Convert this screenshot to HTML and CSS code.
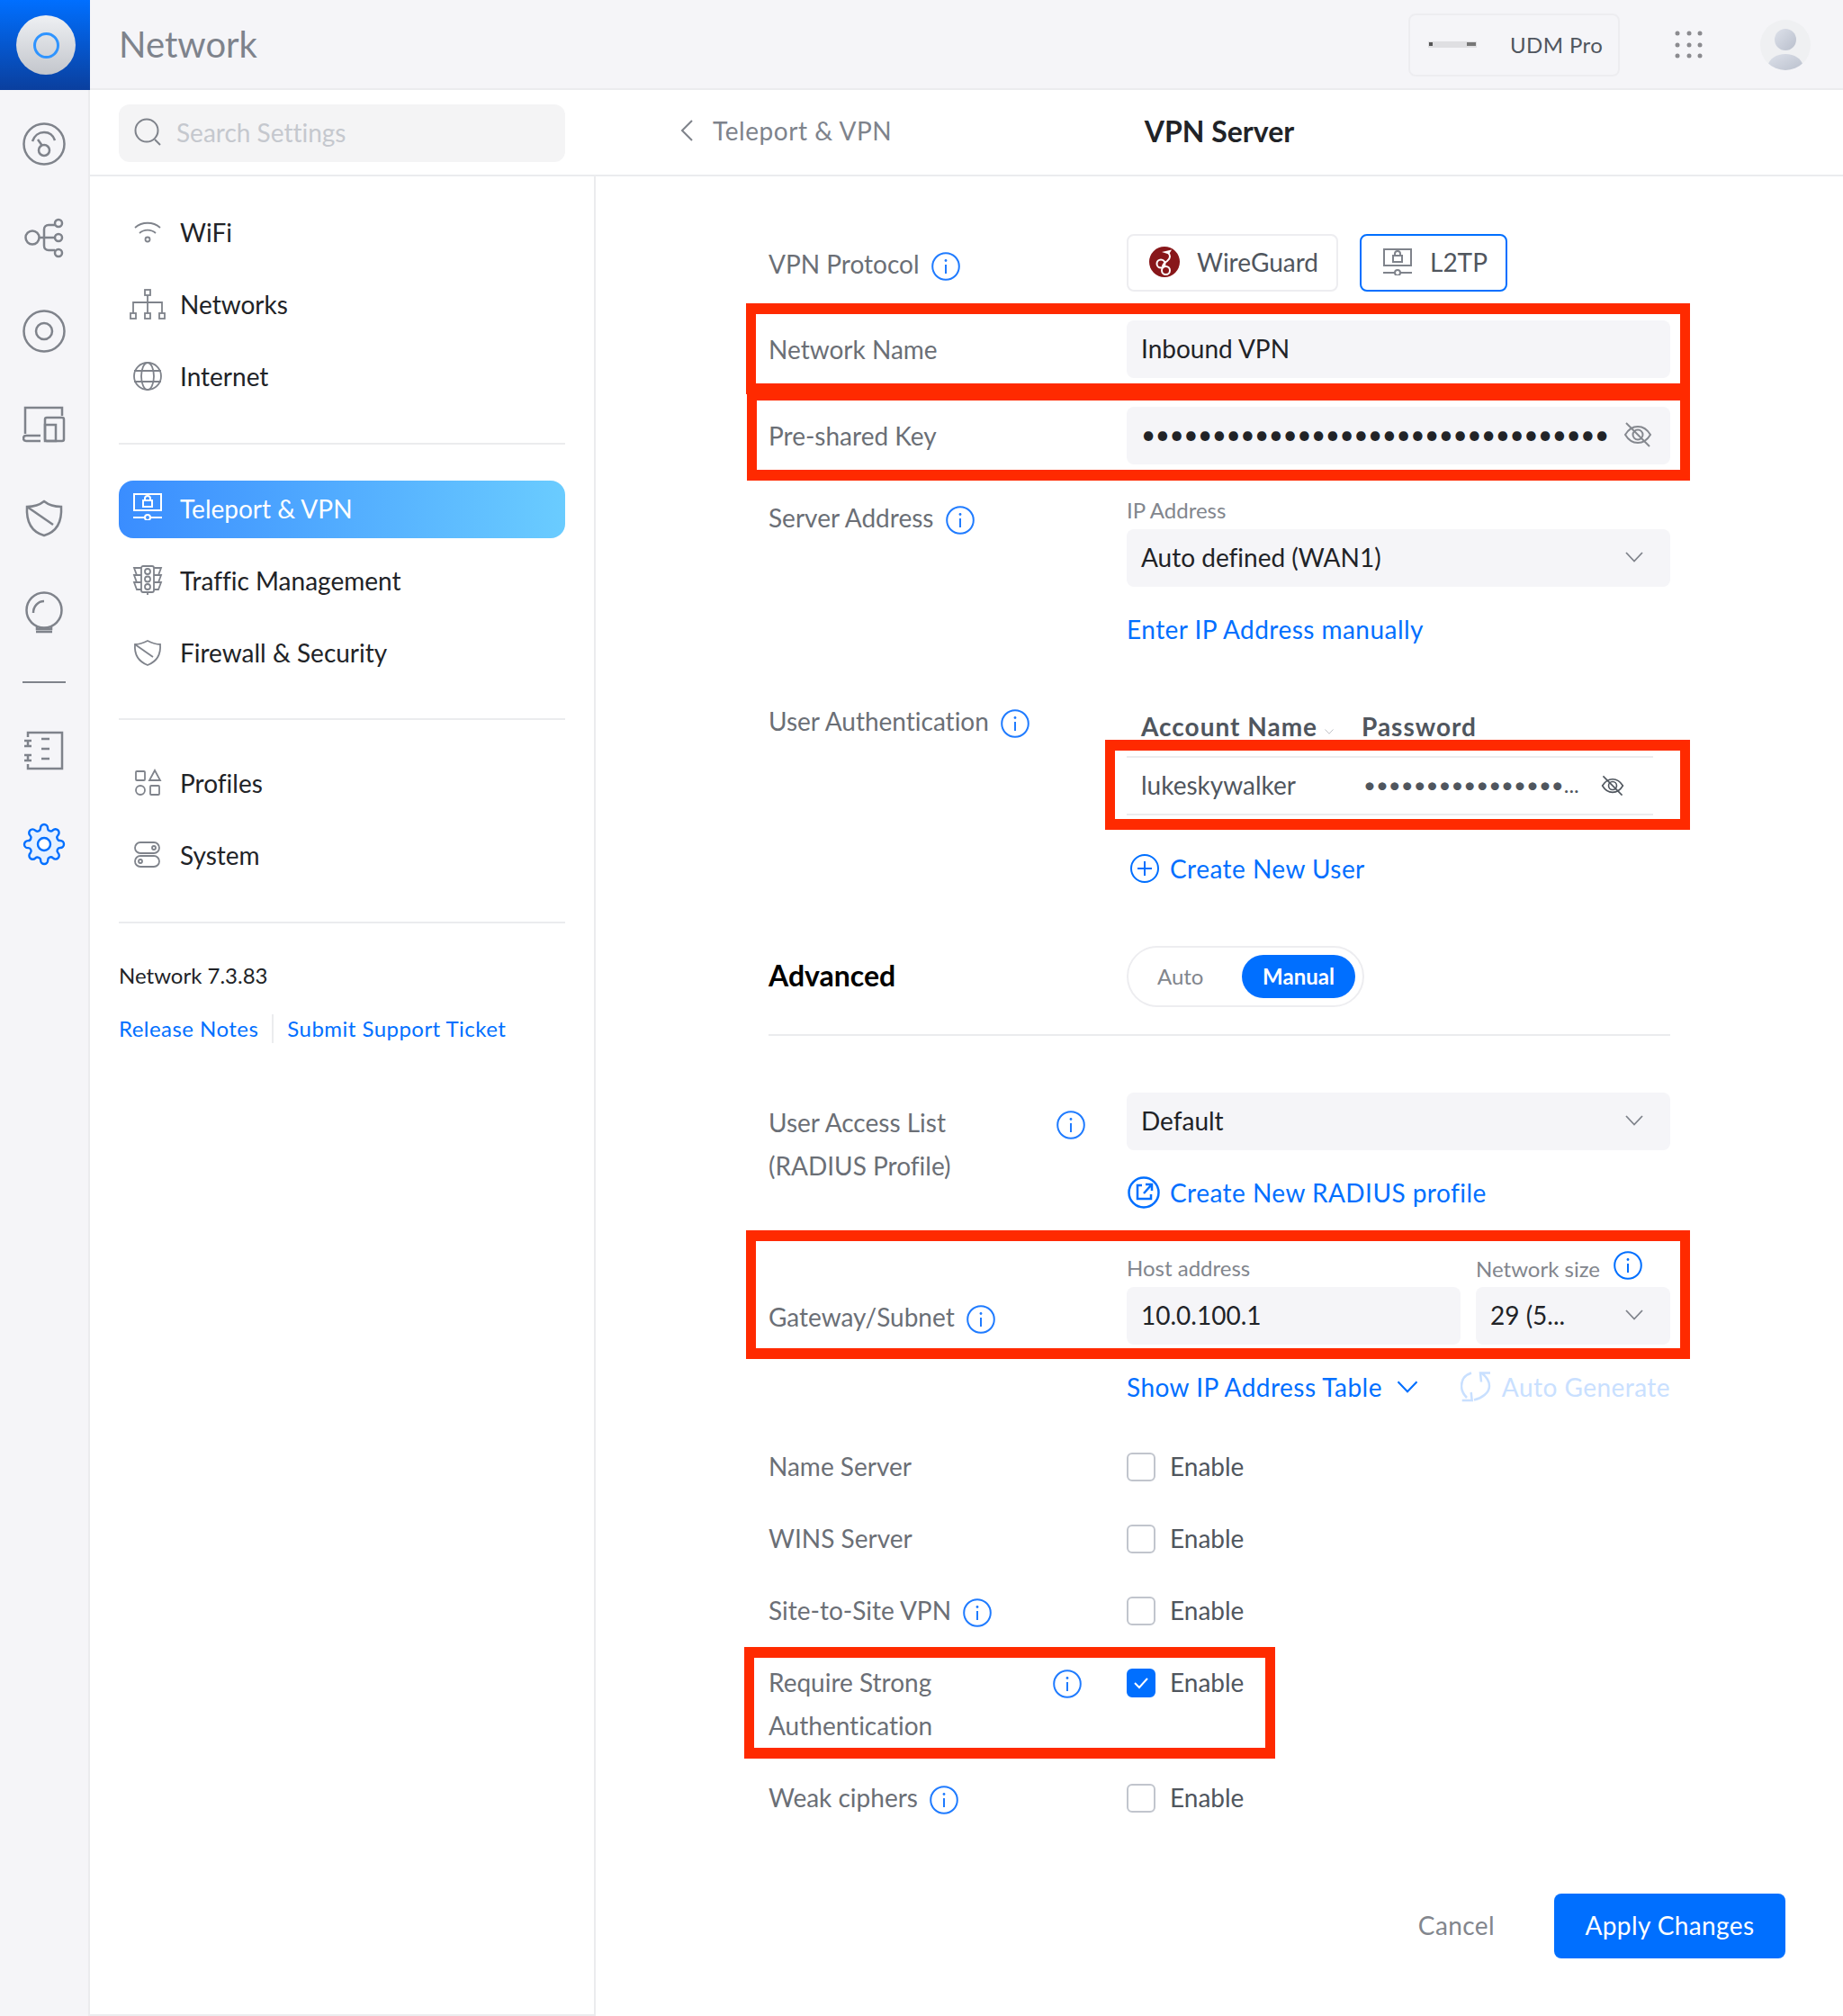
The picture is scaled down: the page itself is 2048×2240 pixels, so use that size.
FILE: index.html
```html
<!DOCTYPE html>
<html lang="en">
<head>
  <meta charset="UTF-8" />
  <title>Network - VPN Server</title>
  <link rel="stylesheet" href="styles.css">
</head>
<body>
  <svg class="defs" width="0" height="0">
    <symbol id="i-info" viewBox="0 0 32 32">
      <circle cx="16" cy="16" r="14.8" fill="none" stroke="currentColor" stroke-width="2"/>
      <circle cx="16" cy="9.5" r="1.4" fill="currentColor"/>
      <path d="M16 14v10" fill="none" stroke="currentColor" stroke-width="2"/>
    </symbol>
    <symbol id="i-chevron" viewBox="0 0 20 12">
      <path d="M1 1l9 9.5L19 1" fill="none" stroke="currentColor" stroke-width="1.8"/>
    </symbol>
    <symbol id="i-eye" viewBox="0 0 32 32">
      <g fill="none" stroke="currentColor" stroke-width="2">
        <path d="M2 16c3-5 8-9 14-9s11 4 14 9c-3 5-8 9-14 9S5 21 2 16z"/>
        <circle cx="16" cy="16" r="5.500"/>
        <path d="M3 3l26 26"/>
      </g>
    </symbol>
    <symbol id="i-vpn" viewBox="0 0 32 30">
      <g fill="none" stroke="currentColor" stroke-width="2">
        <rect x="1" y="1" width="30" height="18"/>
        <rect x="11" y="8" width="10" height="7"/>
        <path d="M13 8V6a3 3 0 0 1 6 0v2M0 27h13M19 27h13"/>
        <circle cx="16" cy="27" r="3"/>
      </g>
    </symbol>
  </svg>

  <div class="app">
    <header class="top-bar">
      <div class="logo">
        <div class="logo-disc"><div class="logo-ring"></div></div>
      </div>
      <div class="app-name">Network</div>
      <div class="device">
        <div class="device-pic"><span class="led"></span><span class="ports"></span></div>
        <span>UDM Pro</span>
      </div>
      <svg class="apps" width="32" height="32" viewBox="0 0 32 32" fill="#8b8b8f">
        <circle cx="3" cy="3" r="2.500"/><circle cx="16" cy="3" r="2.500"/><circle cx="28" cy="3" r="2.500"/>
        <circle cx="3" cy="16" r="2.500"/><circle cx="16" cy="16" r="2.500"/><circle cx="28" cy="16" r="2.500"/>
        <circle cx="3" cy="28" r="2.500"/><circle cx="16" cy="28" r="2.500"/><circle cx="28" cy="28" r="2.500"/>
      </svg>
      <svg class="avatar" width="56" height="56" viewBox="0 0 56 56">
        <defs>
          <clipPath id="avatar-clip"><circle cx="28" cy="28" r="28"/></clipPath>
          <linearGradient id="avatar-fill" x1="0" y1="0" x2="1" y2="1">
            <stop offset="0" stop-color="#dde1ea"/><stop offset="1" stop-color="#b9bfcc"/>
          </linearGradient>
        </defs>
        <circle cx="28" cy="28" r="28" fill="#eff0f2"/>
        <g clip-path="url(#avatar-clip)">
          <circle cx="28" cy="22" r="12" fill="url(#avatar-fill)"/>
          <path d="M8 52c2-9 10-14 20-14s18 5 20 14l-20 6z" fill="url(#avatar-fill)"/>
        </g>
      </svg>
    </header>

    <div class="body-wrap">
      <nav class="rail">
        <svg class="rail-icon" viewBox="0 0 48 48"><ellipse cx="24" cy="24" rx="22.500" ry="22.500"/><path d="M11 21c2-6 7-10 13-10s10 3 12 9"/><circle cx="24" cy="31" r="6"/><path d="M17 19l5 7"/></svg>
        <svg class="rail-icon" viewBox="0 0 48 48"><circle cx="11" cy="24" r="7.500"/><path d="M18.500 24h17.500M36 10h-7c-3 0-5 2-5 5v18c0 3 2 5 5 5h7"/><circle cx="40" cy="8" r="4"/><circle cx="40" cy="24" r="4"/><circle cx="40" cy="41" r="4"/></svg>
        <svg class="rail-icon" viewBox="0 0 48 48"><circle cx="24" cy="24" r="22.500"/><circle cx="24" cy="24" r="9"/></svg>
        <svg class="rail-icon" viewBox="0 0 48 48"><path d="M3 34V5h41v9M20 42H4c-2 0-3-1-3-3s1-3 3-3h16"/><rect x="25" y="16" width="21" height="26" rx="2"/><rect x="25" y="24" width="12" height="18"/></svg>
        <svg class="rail-icon" viewBox="0 0 48 48"><path d="M5 11c8 0 14-2 19-6 5 4 11 6 19 6 1 17-5 28-19 32C10 39 4 28 5 11z"/><path d="M5 11l29 20"/></svg>
        <svg class="rail-icon" viewBox="0 0 48 48"><circle cx="24" cy="22" r="19.500"/><path d="M16 40v3h16v-3M15 46h18M12 25c0-7 5-13 12-13"/></svg>
        <div class="rail-line"></div>
        <svg class="rail-icon" viewBox="0 0 48 48"><path d="M6 9V4h38v40H6v-5"/><path d="M21 11h9M21 22h9M21 33h9M2 13h8M6 13v6M2 19h8M2 29h8M6 29v6M2 35h8"/></svg>
        <svg class="rail-icon gear" viewBox="0 0 24 24"><path d="M19.400 15a1.650 1.650 0 0 0 .33 1.820l.06.06a2 2 0 0 1 0 2.830 2 2 0 0 1-2.830 0l-.06-.06a1.650 1.650 0 0 0-1.820-.33 1.650 1.650 0 0 0-1 1.510V21a2 2 0 0 1-2 2 2 2 0 0 1-2-2v-.09A1.650 1.650 0 0 0 9 19.400a1.650 1.650 0 0 0-1.820.33l-.06.06a2 2 0 0 1-2.830 0 2 2 0 0 1 0-2.830l.06-.06a1.650 1.650 0 0 0 .33-1.820 1.650 1.650 0 0 0-1.510-1H3a2 2 0 0 1-2-2 2 2 0 0 1 2-2h.09A1.650 1.650 0 0 0 4.600 9a1.650 1.650 0 0 0-.33-1.820l-.06-.06a2 2 0 0 1 0-2.830 2 2 0 0 1 2.830 0l.06.06a1.650 1.650 0 0 0 1.820.33H9a1.650 1.650 0 0 0 1-1.510V3a2 2 0 0 1 2-2 2 2 0 0 1 2 2v.09a1.650 1.650 0 0 0 1 1.510 1.650 1.650 0 0 0 1.820-.33l.06-.06a2 2 0 0 1 2.830 0 2 2 0 0 1 0 2.830l-.06.06a1.650 1.650 0 0 0-.33 1.820V9a1.650 1.650 0 0 0 1.510 1H21a2 2 0 0 1 2 2 2 2 0 0 1-2 2h-.09a1.650 1.650 0 0 0-1.510 1z"/><circle cx="12" cy="12" r="3.500" fill="#fff"/></svg>
      </nav>

      <div class="workspace">
        <div class="sub-bar">
          <div class="search-cell">
            <div class="search">
              <svg width="32" height="32" viewBox="0 0 32 32" fill="none" stroke="#7f838b" stroke-width="2"><circle cx="15" cy="14" r="12.500"/><path d="M24 24l6 6"/></svg>
              <span>Search Settings</span>
            </div>
          </div>
          <div class="crumb">
            <div class="crumb-back">
              <svg width="16" height="24" viewBox="0 0 16 24" fill="none" stroke="#7f838b" stroke-width="2"><path d="M13 1L2 12l11 11"/></svg>
              <span>Teleport &amp; VPN</span>
            </div>
            <div class="crumb-title">VPN Server</div>
          </div>
        </div>

        <div class="panes">
          <aside class="sidebar">
            <ul class="menu">
              <li class="menu-item">
                <svg class="menu-icon" viewBox="0 0 40 40"><path d="M6 15c8-7 20-7 28 0M11 21c5-4.500 13-4.500 18 0"/><circle cx="20" cy="28" r="2.500"/></svg>
                WiFi
              </li>
              <li class="menu-item">
                <svg class="menu-icon" viewBox="0 0 40 40"><rect x="17" y="4" width="6" height="6"/><rect x="1" y="30" width="6" height="6"/><rect x="17" y="30" width="6" height="6"/><rect x="33" y="30" width="6" height="6"/><path d="M20 10v20M4 30V18h32v12"/></svg>
                Networks
              </li>
              <li class="menu-item">
                <svg class="menu-icon" viewBox="0 0 40 40"><circle cx="20" cy="20" r="15"/><ellipse cx="20" cy="20" rx="7" ry="15"/><path d="M5 14h30M5 26h30"/></svg>
                Internet
              </li>
            </ul>
            <ul class="menu">
              <li class="menu-item active">
                <svg class="menu-icon" viewBox="0 0 40 40"><use href="#i-vpn" x="4" y="3" width="32" height="30"/></svg>
                Teleport &amp; VPN
              </li>
              <li class="menu-item">
                <svg class="menu-icon" viewBox="0 0 40 40"><rect x="13" y="4" width="14" height="29" rx="2"/><circle cx="20" cy="10" r="3"/><circle cx="20" cy="18.500" r="3"/><circle cx="20" cy="27" r="3"/><path d="M13 6H5l3 8h5M13 14H5l3 8h5M13 22H5l3 8h5M27 6h8l-3 8h-5M27 14h8l-3 8h-5M27 22h8l-3 8h-5M20 33v3"/></svg>
                Traffic Management
              </li>
              <li class="menu-item">
                <svg class="menu-icon" viewBox="0 0 40 40"><path d="M6 11c6 0 10-2 14-4 4 2 8 4 14 4 1 12-4 19-14 23C10 30 5 23 6 11z"/><path d="M6 11l20 14"/></svg>
                Firewall &amp; Security
              </li>
            </ul>
            <ul class="menu menu-last">
              <li class="menu-item">
                <svg class="menu-icon" viewBox="0 0 40 40"><rect x="7" y="7" width="10" height="10" rx="1"/><path d="M28 6l6 11H22z"/><circle cx="12" cy="28" r="5"/><rect x="23" y="23" width="10" height="10" rx="1"/></svg>
                Profiles
              </li>
              <li class="menu-item">
                <svg class="menu-icon" viewBox="0 0 40 40"><rect x="6" y="6" width="27" height="12" rx="6"/><rect x="6" y="21" width="27" height="12" rx="6"/><circle cx="27" cy="12" r="2"/><circle cx="12" cy="27" r="2"/></svg>
                System
              </li>
            </ul>
            <div class="version">Network 7.3.83</div>
            <div class="side-links">
              <a class="side-link">Release Notes</a>
              <a class="side-link">Submit Support Ticket</a>
            </div>
          </aside>

          <main class="main">
            <div class="form">
              <div class="row row-protocol">
                <div class="label">VPN Protocol <svg class="info"><use href="#i-info"/></svg></div>
                <div class="choices">
                  <div class="choice">
                    <svg width="36" height="36" viewBox="0 0 36 36">
                      <circle cx="18" cy="18" r="17" fill="#88171a"/>
                      <g fill="none" stroke="#fff" stroke-width="2">
                        <circle cx="14" cy="20" r="4.500"/>
                        <circle cx="19.500" cy="27.500" r="4.500"/>
                        <path d="M21 7c4 3 4 7 0 10-3 2-5 4-5 6"/>
                      </g>
                      <path d="M15 7l11-2.500-3 5z" fill="#fff"/>
                    </svg>
                    WireGuard
                  </div>
                  <div class="choice selected">
                    <svg class="vpn-icon" width="32" height="30"><use href="#i-vpn"/></svg>
                    L2TP
                  </div>
                </div>
              </div>

              <div class="row">
                <div class="label">Network Name</div>
                <div class="field">Inbound VPN</div>
              </div>

              <div class="row">
                <div class="label">Pre-shared Key</div>
                <div class="field secret">
                  <span class="dots">•••••••••••••••••••••••••••••••••</span>
                  <svg class="eye"><use href="#i-eye"/></svg>
                </div>
              </div>

              <div class="row row-server">
                <div class="label">Server Address <svg class="info"><use href="#i-info"/></svg></div>
                <div>
                  <div class="field-title">IP Address</div>
                  <div class="field select">Auto defined (WAN1) <svg class="chev"><use href="#i-chevron"/></svg></div>
                  <div class="link link-under">Enter IP Address manually</div>
                </div>
              </div>

              <div class="row row-users">
                <div class="label">User Authentication <svg class="info"><use href="#i-info"/></svg></div>
                <div>
                  <div class="user-table">
                    <div class="user-head">
                      <div class="col-name">Account Name <svg class="chev-small" viewBox="0 0 20 12"><use href="#i-chevron"/></svg></div>
                      <div>Password</div>
                    </div>
                    <div class="user-row">
                      <div class="col-name">lukeskywalker</div>
                      <div class="user-pass">••••••••••••••••<span class="more">...</span></div>
                      <svg class="eye-small"><use href="#i-eye"/></svg>
                    </div>
                  </div>
                  <div class="link link-icon link-new-user">
                    <svg width="34" height="34" viewBox="0 0 34 34" fill="none" stroke="currentColor" stroke-width="2"><circle cx="17" cy="17" r="15"/><path d="M17 9v16M9 17h16"/></svg>
                    Create New User
                  </div>
                </div>
              </div>

              <div class="row row-advanced">
                <div class="section-title">Advanced</div>
                <div class="switch">
                  <span class="switch-opt">Auto</span>
                  <span class="switch-opt on">Manual</span>
                </div>
              </div>

              <div class="row row-radius">
                <div class="label-split">
                  <div class="label">User Access List<br>(RADIUS Profile)</div>
                  <svg class="info info-split"><use href="#i-info"/></svg>
                </div>
                <div>
                  <div class="field select">Default <svg class="chev"><use href="#i-chevron"/></svg></div>
                  <div class="link link-icon link-under link-radius">
                    <svg width="36" height="38" viewBox="0 0 36 38" fill="none" stroke="currentColor" stroke-width="2.500"><circle cx="18" cy="19" r="16.500"/><path d="M16 11h-5v15h15v-5M18 20l8-9M20 10h7v7"/></svg>
                    Create New RADIUS profile
                  </div>
                </div>
              </div>

              <div class="row row-gateway">
                <div class="label label-bottom">Gateway/Subnet <svg class="info"><use href="#i-info"/></svg></div>
                <div class="gateway">
                  <div class="gateway-host">
                    <div class="field-title">Host address</div>
                    <div class="field">10.0.100.1</div>
                  </div>
                  <div class="gateway-size">
                    <div class="field-title">Network size <svg class="info info-raised"><use href="#i-info"/></svg></div>
                    <div class="field select">29 (5... <svg class="chev"><use href="#i-chevron"/></svg></div>
                  </div>
                </div>
              </div>

              <div class="row row-table-link">
                <div></div>
                <div class="table-links">
                  <div class="link link-show">Show IP Address Table <svg class="chev-blue"><use href="#i-chevron"/></svg></div>
                  <div class="link link-off">
                    <svg width="34" height="36" viewBox="0 0 34 36" fill="none" stroke="currentColor" stroke-width="2.500"><path d="M12 2.500C4 5 1 11 1 17c0 6 3 10 6 13M1.700 33h11l-1-9M15 32.500c9-2 17-8 17-15.500 0-6-3-10-8-14M33 2.500H22l1 10"/></svg>
                    Auto Generate
                  </div>
                </div>
              </div>

              <div class="row row-check row-check-first">
                <div class="label">Name Server</div>
                <label class="check"><span class="box"></span>Enable</label>
              </div>
              <div class="row row-check">
                <div class="label">WINS Server</div>
                <label class="check"><span class="box"></span>Enable</label>
              </div>
              <div class="row row-check">
                <div class="label">Site-to-Site VPN <svg class="info"><use href="#i-info"/></svg></div>
                <label class="check"><span class="box"></span>Enable</label>
              </div>
              <div class="row row-check">
                <div class="label-split narrow">
                  <div class="label">Require Strong<br>Authentication</div>
                  <svg class="info info-split"><use href="#i-info"/></svg>
                </div>
                <label class="check">
                  <span class="box checked">
                    <svg width="20" height="16" viewBox="0 0 20 16" fill="none" stroke="#fff" stroke-width="2"><path d="M3 8l5 5L17 3"/></svg>
                  </span>Enable
                </label>
              </div>
              <div class="row row-check">
                <div class="label">Weak ciphers <svg class="info"><use href="#i-info"/></svg></div>
                <label class="check"><span class="box"></span>Enable</label>
              </div>
            </div>

            <div class="actions">
              <button class="btn-cancel">Cancel</button>
              <button class="btn-apply">Apply Changes</button>
            </div>
          </main>
        </div>
      </div>
    </div>

    <!-- red markers drawn on top of the form -->
    <div class="mark mark-name"></div>
    <div class="mark mark-key"></div>
    <div class="mark mark-user"></div>
    <div class="mark mark-gateway"></div>
    <div class="mark mark-auth"></div>
  </div>
</body>
</html>
```

FILE: styles.css
```css
* {
  box-sizing: border-box;
}

body {
  margin: 0;
  background: #fff;
  font-family: "Lato", "Noto Sans", sans-serif;
  font-size: 28px;
  font-variant-ligatures: none;
  color: #212327;
}

.defs {
  position: absolute;
}

.app {
  position: relative;
  width: 2048px;
  height: 2240px;
  overflow: hidden;
}

/* top bar */
.top-bar {
  display: flex;
  align-items: center;
  height: 100px;
  background: #f5f5f8;
  border-bottom: 2px solid #ebecee;
}

.logo {
  display: flex;
  align-items: center;
  justify-content: center;
  align-self: flex-start;
  flex: none;
  width: 100px;
  height: 100px;
  padding-left: 2px;
  background: linear-gradient(180deg, #006fff, #0a3f9e);
}

.logo-disc {
  display: flex;
  align-items: center;
  justify-content: center;
  width: 66px;
  height: 66px;
  border-radius: 50%;
  background: linear-gradient(180deg, #eef0f3, #c3c6cc);
}

.logo-ring {
  width: 29px;
  height: 29px;
  border: 3px solid #2f94ff;
  border-radius: 50%;
}

.app-name {
  margin-left: 32px;
  padding-bottom: 1px;
  font-size: 40px;
  color: #7e838c;
}

.device {
  display: flex;
  align-items: center;
  width: 235px;
  height: 70px;
  margin: 2px 0 0 auto;
  padding: 0 0 2px 20px;
  border: 2px solid #ededf0;
  border-radius: 8px;
  font-size: 24px;
  letter-spacing: 0.4px;
  color: #50565e;
}

.device-pic {
  display: flex;
  align-items: center;
  justify-content: space-between;
  width: 54px;
  height: 7px;
  margin-right: 37px;
  padding: 0 1px;
  background: #dfdfe2;
}

.led {
  width: 4px;
  height: 4px;
  background: #555;
}

.ports {
  width: 10px;
  height: 4px;
  margin-left: 26px;
  background: #777;
}

.apps {
  margin: 2px 0 0 61px;
}

.avatar {
  margin: 2px 36px 0 63px;
}

.body-wrap {
  display: flex;
  height: 2140px;
}

/* left rail */
.rail {
  display: flex;
  flex-direction: column;
  align-items: center;
  flex: 0 0 100px;
  gap: 56px;
  padding-top: 36px;
  background: #f5f5f8;
  border-right: 2px solid #ebecee;
}

.rail-icon {
  flex: none;
  width: 48px;
  height: 48px;
  fill: none;
  stroke: #7f838b;
  stroke-width: 2.5;
}

.rail-line {
  width: 48px;
  height: 2px;
  margin: -3px 0 -5px;
  background: #7f838b;
}

.gear {
  fill: #e5f0ff;
  stroke: #006fff;
  stroke-width: 1.2;
}

.workspace {
  flex: 1;
  display: flex;
  flex-direction: column;
}

/* search + breadcrumb */
.sub-bar {
  display: flex;
  height: 96px;
  border-bottom: 2px solid #ebecee;
}

.search-cell {
  flex: 0 0 560px;
  padding: 16px 32px 0;
}

.search {
  display: flex;
  align-items: center;
  gap: 16px;
  height: 64px;
  padding: 0 0 2px 16px;
  background: #f4f4f5;
  border-radius: 12px;
  color: #c5c8ce;
}

.crumb {
  position: relative;
  flex: 1;
  display: flex;
  align-items: center;
  justify-content: center;
  padding: 0 0 3px 2px;
}

.crumb-back {
  position: absolute;
  left: 96px;
  top: 28px;
  display: flex;
  align-items: center;
  gap: 20px;
  letter-spacing: 0.55px;
  color: #7e838c;
}

.crumb-title {
  font-size: 32px;
  font-weight: 700;
  color: #212327;
}

.panes {
  flex: 1;
  display: flex;
}

/* settings sidebar */
.sidebar {
  flex: 0 0 562px;
  padding: 31px 32px 0;
  border-right: 2px solid #ebecee;
  border-bottom: 2px solid #ebecee;
}

.menu {
  margin: 0 0 40px;
  padding: 0 0 41px;
  list-style: none;
  border-bottom: 2px solid #ebecee;
}

.menu:nth-child(2) {
  padding-bottom: 40px;
}

.menu-last {
  margin-top: -1px;
}

.menu-item {
  display: flex;
  align-items: center;
  gap: 16px;
  height: 64px;
  margin-bottom: 16px;
  padding: 0 0 2px 12px;
  border-radius: 16px;
  color: #212327;
}

.menu-item:last-child {
  margin-bottom: 0;
}

.menu-item.active {
  background: linear-gradient(90deg, #3a8dff, #6accff);
  color: #fff;
}

.menu-icon {
  flex: none;
  width: 40px;
  height: 40px;
  fill: none;
  stroke: #7f838b;
  stroke-width: 1.8;
}

.active .menu-icon {
  stroke: #fff;
  color: #fff;
}

.version {
  font-size: 24px;
  line-height: 36px;
  color: #212327;
}

.side-links {
  display: flex;
  margin-top: 25px;
  font-size: 24px;
  line-height: 32px;
  letter-spacing: 0.46px;
  color: #006fff;
}

.side-link:first-child {
  padding-right: 15px;
  margin-right: 15px;
  border-right: 2px solid #ebecee;
}

/* form */
.main {
  flex: 1;
  padding: 64px 0 0 192px;
}

.form {
  width: 1002px;
}

.row {
  display: grid;
  grid-template-columns: 398px 604px;
  margin-top: 32px;
}

.row-protocol {
  margin-top: 0;
}

.label {
  line-height: 48px;
  color: #6b6f76;
  white-space: nowrap;
}

.row-protocol .label {
  height: 64px;
  line-height: 64px;
}

.row > .label:not(.label-bottom) {
  padding-top: 8px;
}

.row-protocol > .label:not(.label-bottom) {
  padding-top: 1px;
}

.row-check > .label:not(.label-bottom) {
  padding-top: 0;
}

.row-server > .label:not(.label-bottom) {
  padding-top: 3px;
}

.row-check .label {
  margin: -1px 0 1px;
}

.info {
  width: 32px;
  height: 32px;
  margin-left: 6px;
  vertical-align: -8px;
  color: #1f7bff;
}

.choices {
  display: flex;
  gap: 24px;
}

.choice {
  display: flex;
  align-items: center;
  gap: 18px;
  height: 64px;
  padding: 0 20px 2px 22px;
  border: 2px solid #ededf0;
  border-radius: 8px;
  color: #50565e;
}

.choice.selected {
  border-color: #006fff;
  gap: 20px;
  padding: 0 20px 2px 24px;
}

.vpn-icon {
  color: #7f838b;
}

.field {
  display: flex;
  align-items: center;
  height: 64px;
  padding: 0 16px 2px;
  background: #f5f5f8;
  border-radius: 8px;
  color: #212327;
}

.select {
  justify-content: space-between;
}

.chev {
  width: 20px;
  height: 12px;
  margin-right: 14px;
  color: #7f838b;
}

.secret {
  justify-content: space-between;
  padding-right: 20px;
}

.dots {
  margin-bottom: 2px;
  font-size: 28px;
  letter-spacing: -0.49px;
  line-height: 1;
  white-space: nowrap;
  color: #212327;
}

.eye {
  width: 32px;
  height: 32px;
  color: #85888f;
}

.field-title {
  height: 40px;
  font-size: 24px;
  line-height: 38px;
  color: #82868d;
}

.link {
  padding-bottom: 2px;
  line-height: 46px;
  letter-spacing: 0.46px;
  color: #006fff;
}

.link-under {
  margin-top: 24px;
}

.link-icon {
  display: flex;
  align-items: center;
  gap: 11px;
}

.link-radius {
  padding-left: 1px;
}

.row-users {
  margin-top: 53px;
}

.row-users > .label:not(.label-bottom) {
  padding-top: 0;
}

.user-table {
  width: 585px;
}

.user-head {
  display: flex;
  align-items: center;
  height: 40px;
  margin-top: 10px;
  font-weight: 700;
  letter-spacing: 1px;
  color: #50565e;
}

.col-name {
  flex: 0 0 261px;
  padding-left: 16px;
}

.chev-small {
  width: 10px;
  height: 6px;
  vertical-align: 2px;
  color: #b5b8bd;
}

.user-row {
  display: flex;
  align-items: center;
  height: 66px;
  margin-top: 13px;
  padding-bottom: 3px;
  border-top: 2px solid #ebecee;
  border-bottom: 2px solid #ebecee;
  color: #50565e;
}

.user-pass {
  flex: 0 0 266px;
  padding-left: 2px;
  font-size: 24px;
  white-space: nowrap;
}

.eye-small {
  width: 26px;
  height: 26px;
  margin-top: 2px;
  color: #50565e;
}

.link-new-user {
  margin-top: 36px;
  padding-left: 3px;
}

.row-advanced {
  margin-top: 61px;
  padding-bottom: 30px;
  border-bottom: 2px solid #ebecee;
  align-items: center;
}

.section-title {
  padding-bottom: 3px;
  font-size: 32px;
  font-weight: 700;
  color: #000;
}

.switch {
  display: flex;
  align-items: center;
  justify-content: space-between;
  width: 264px;
  height: 68px;
  padding: 0 8px 0 32px;
  border: 2px solid #ededf0;
  border-radius: 34px;
  font-size: 24px;
  color: #82868d;
}

.switch-opt {
  padding-bottom: 2px;
}

.switch-opt.on {
  display: flex;
  align-items: center;
  justify-content: center;
  width: 126px;
  height: 48px;
  border-radius: 24px;
  background: #006fff;
  color: #fff;
  font-weight: 700;
}

.row-radius {
  margin-top: 63px;
}

.label-split {
  display: flex;
  justify-content: space-between;
  width: 352px;
}

.label-split.narrow {
  width: 348px;
}

.info-split {
  flex: none;
  margin: 9px 0 0;
}

.row-radius .label {
  padding-top: 9px;
}

.row-radius .info-split {
  margin-top: 20px;
}

.row-gateway {
  margin-top: 40px;
}

.label-bottom {
  align-self: end;
  padding-bottom: 7px;
}

.gateway {
  display: flex;
  gap: 17px;
}

.gateway-host {
  flex: 0 0 371px;
}

.gateway-size {
  flex: 0 0 216px;
}

.row-gateway .field-title {
  white-space: nowrap;
}

.info-raised {
  margin-left: 9px;
  vertical-align: -3px;
  color: #006fff;
}

.row-table-link {
  margin-top: 24px;
}

.table-links {
  display: flex;
  justify-content: space-between;
}

.link-show {
  display: flex;
  align-items: center;
}

.chev-blue {
  width: 24px;
  height: 14px;
  margin-left: 16px;
  color: #006fff;
}

.link-off {
  display: flex;
  align-items: center;
  gap: 12px;
  color: #c9e0ff;
}

.row-check-first {
  margin-top: 40px;
}

.check {
  display: flex;
  align-items: flex-start;
  height: 48px;
  line-height: 46px;
  color: #50565e;
}

.box {
  display: flex;
  align-items: center;
  justify-content: center;
  flex: none;
  width: 32px;
  height: 32px;
  margin: 8px 16px 0 0;
  background: #fff;
  border: 2px solid #c1c5cd;
  border-radius: 6px;
}

.box.checked {
  background: #006fff;
  border-color: #006fff;
}

.actions {
  display: flex;
  align-items: center;
  justify-content: flex-end;
  width: 1130px;
  margin-top: 82px;
}

.actions button {
  padding: 0 0 2px;
  font-family: inherit;
  font-size: 28px;
  letter-spacing: 0.4px;
  border: none;
}

.btn-cancel {
  margin-right: 66px;
  background: none;
  color: #82868d;
}

.btn-apply {
  width: 257px;
  height: 72px;
  background: #006fff;
  border-radius: 8px;
  color: #fff;
}

/* annotations */
.mark {
  position: absolute;
  border: 11px solid #ff2a00;
  border-top-width: 12px;
  border-bottom-width: 12px;
}

.mark-name {
  left: 829px;
  top: 337px;
  width: 1049px;
  height: 101px;
}

.mark-key {
  left: 830px;
  top: 433px;
  width: 1048px;
  height: 101px;
}

.mark-user {
  left: 1228px;
  top: 822px;
  width: 650px;
  height: 100px;
}

.mark-gateway {
  left: 829px;
  top: 1367px;
  width: 1049px;
  height: 143px;
}

.mark-auth {
  left: 827px;
  top: 1830px;
  width: 590px;
  height: 124px;
}
```
